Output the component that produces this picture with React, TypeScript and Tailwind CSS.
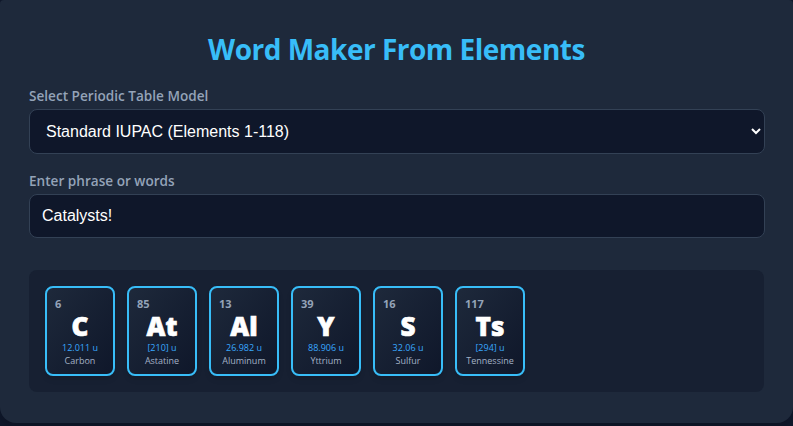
const els = [
  { n: 6, s: "C", m: "12.011 u", name: "Carbon" },
  { n: 85, s: "At", m: "[210] u", name: "Astatine" },
  { n: 13, s: "Al", m: "26.982 u", name: "Aluminum" },
  { n: 39, s: "Y", m: "88.906 u", name: "Yttrium" },
  { n: 16, s: "S", m: "32.06 u", name: "Sulfur" },
  { n: 117, s: "Ts", m: "[294] u", name: "Tennessine" },
];

export default function App() {
  return (
    <div className="h-[426px] w-[793px] overflow-hidden bg-[#0f172a] font-['Open_Sans',sans-serif]">
      <div className="h-[423px] rounded-t-[4px] rounded-b-2xl bg-[#1e293b] px-[29px] pt-[29px] shadow-lg">
        <h1 className="mb-[18px] h-[40px] text-center text-[28px] leading-[40px] font-bold tracking-[-0.5px] text-[#38bdf8]">
          Word Maker From Elements
        </h1>
        <label className="mb-[4px] block h-[18px] text-[13.6px] leading-[18px] font-semibold text-[#94a3b8]">
          Select Periodic Table Model
        </label>
        <select className="mb-[18px] block h-[45px] w-[736px] rounded-lg border border-[#334155] bg-[#0f172a] pl-[12px] font-['Liberation_Sans',sans-serif] text-base text-white">
          <option>Standard IUPAC (Elements 1-118)</option>
        </select>
        <label className="mb-[4px] block h-[18px] text-[13.6px] leading-[18px] font-semibold text-[#94a3b8]">
          Enter phrase or words
        </label>
        <input
          readOnly
          value="Catalysts!"
          className="block h-[44px] w-[736px] rounded-lg border border-[#334155] bg-[#0f172a] px-3 font-['Liberation_Sans',sans-serif] text-base text-white outline-none"
        />
        <div className="mt-[32px] flex h-[122px] gap-3 rounded-lg bg-[#0f172a]/50 p-4">
          {els.map((e) => (
            <div
              key={e.n}
              className="flex h-[90px] w-[70px] flex-col rounded-lg border-2 border-[#38bdf8] bg-gradient-to-br from-[#1e293b] to-[#0f172a] px-2 pt-[8px] shadow-md"
            >
              <div className="h-[16px] text-[11px] leading-[16px] font-bold text-[#94a3b8]">{e.n}</div>
              <div className="h-[29px] text-center text-[26px] leading-[29px] font-extrabold text-white [-webkit-text-stroke:0.7px_white]">
                {e.s}
              </div>
              <div className="h-[13px] text-center text-[9px] leading-[13px] text-[#38a8ff]">{e.m}</div>
              <div className="h-[13px] text-center text-[9px] leading-[13px] whitespace-nowrap text-[#a3b1c6]">
                {e.name}
              </div>
            </div>
          ))}
        </div>
      </div>
    </div>
  );
}
